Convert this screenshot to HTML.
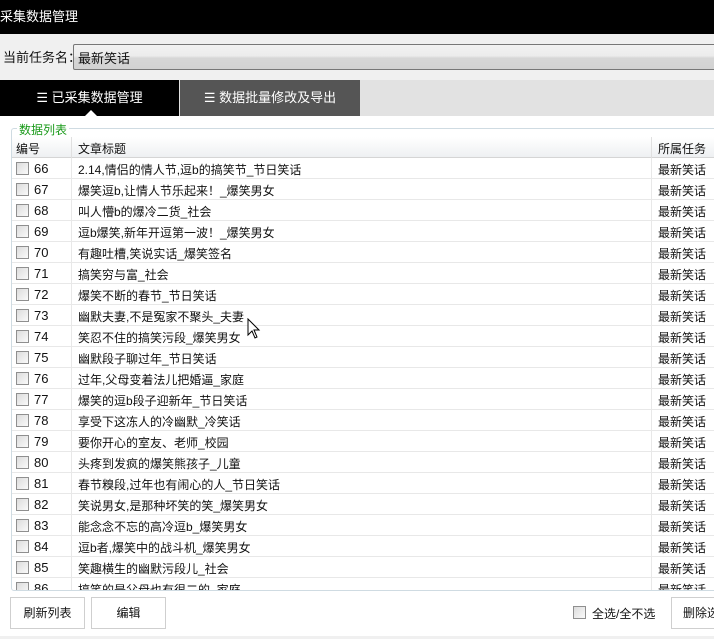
<!DOCTYPE html>
<html><head><meta charset="utf-8"><style>
*{margin:0;padding:0;box-sizing:border-box}
body{width:714px;height:639px;overflow:hidden;background:#fff;font-family:"Liberation Sans","Microsoft YaHei","Noto Sans CJK SC",sans-serif;font-size:12px;color:#111;position:relative;white-space:nowrap}
.a{position:absolute}
.cb{position:absolute;width:13px;height:13px;border:1px solid #8f8f8f;background:linear-gradient(135deg,#dcdcdc,#fafafa)}
.row{position:absolute;left:12px;width:702px;height:21px;border-bottom:1px solid #e8e8e8}
.row .n{position:absolute;left:22px;top:3px;font-size:13px}
.row .t{position:absolute;left:66px;top:3px}
.row .k{position:absolute;left:646px;top:3px}
.row .cb{left:4px;top:4px}
.btn{position:absolute;top:597px;height:32px;border:1px solid #cfcfcf;background:#fff;text-align:center;line-height:30px;overflow:hidden}
</style></head><body>
<div class="a" style="left:0;top:0;width:714px;height:34px;background:#000;color:#fff;font-size:13px;line-height:34px">采集数据管理</div>
<div class="a" style="left:0;top:34px;width:714px;height:46px;background:#f0f0f0"></div>
<div class="a" style="left:3px;top:47px;font-size:13px">当前任务名：</div>
<div class="a" style="left:73px;top:44px;width:650px;height:26px;border:1px solid #777;border-radius:2px;background:linear-gradient(#f2f2f2 0%,#ececec 45%,#d6d6d6 55%,#d2d2d2 100%);padding:3px 4px;font-size:13px">最新笑话</div>
<div class="a" style="left:0;top:80px;width:714px;height:36px;background:#e2e2e2"></div>
<div class="a" style="left:0;top:80px;width:179px;height:36px;background:#000;color:#fff;font-size:13px;text-align:center;line-height:36px">☰ 已采集数据管理</div>
<div class="a" style="left:85px;top:110px;width:0;height:0;border-left:6px solid transparent;border-right:6px solid transparent;border-bottom:6px solid #fff"></div>
<div class="a" style="left:180px;top:80px;width:180px;height:36px;background:#555;color:#fff;font-size:13px;text-align:center;line-height:36px">☰ 数据批量修改及导出</div>
<div class="a" style="left:11px;top:128px;width:720px;height:463px;border:1px solid #cfdbe2;border-radius:3px"></div>
<div class="a" style="left:17px;top:121px;background:#fff;color:#1a9a1a;font-size:12px;padding:0 2px">数据列表</div>
<div class="a" style="left:12px;top:137px;width:702px;height:21px;background:linear-gradient(#fff,#eef0f2);border-bottom:1px solid #d5d5d5">
<span class="a" style="left:4px;top:3px">编号</span>
<span class="a" style="left:59px;top:0;height:21px;border-left:1px solid #e0e0e0"></span>
<span class="a" style="left:66px;top:3px">文章标题</span>
<span class="a" style="left:639px;top:0;height:21px;border-left:1px solid #e0e0e0"></span>
<span class="a" style="left:646px;top:3px">所属任务</span>
</div>
<div class="a" style="left:11px;top:158px;width:703px;height:432px;overflow:hidden">
<div class="a" style="left:60px;top:0;height:432px;border-left:1px solid #e8e8e8;z-index:2"></div>
<div class="a" style="left:640px;top:0;height:432px;border-left:1px solid #e8e8e8;z-index:2"></div>
<div id="rows"></div>
</div>
<script>
var t=["2.14,情侣的情人节,逗b的搞笑节_节日笑话","爆笑逗b,让情人节乐起来！_爆笑男女","叫人懵b的爆冷二货_社会","逗b爆笑,新年开逗第一波！_爆笑男女","有趣吐槽,笑说实话_爆笑签名","搞笑穷与富_社会","爆笑不断的春节_节日笑话","幽默夫妻,不是冤家不聚头_夫妻","笑忍不住的搞笑污段_爆笑男女","幽默段子聊过年_节日笑话","过年,父母变着法儿把婚逼_家庭","爆笑的逗b段子迎新年_节日笑话","享受下这冻人的冷幽默_冷笑话","要你开心的室友、老师_校园","头疼到发疯的爆笑熊孩子_儿童","春节糗段,过年也有闹心的人_节日笑话","笑说男女,是那种坏笑的笑_爆笑男女","能念念不忘的高冷逗b_爆笑男女","逗b者,爆笑中的战斗机_爆笑男女","笑趣横生的幽默污段儿_社会","搞笑的是父母也有很二的_家庭"];
var h="";for(var i=0;i<t.length;i++){h+='<div class="row" style="left:1px;top:'+(i*21)+'px"><div class="cb"></div><span class="n">'+(66+i)+'</span><span class="t">'+t[i]+'</span><span class="k">最新笑话</span></div>';}
document.getElementById("rows").innerHTML=h;
</script>
<svg class="a" style="left:247px;top:318px" width="14" height="22" viewBox="0 0 14 22"><path d="M1 1 L1 17 L5 13 L8 20 L10 19 L7 12 L12 12 Z" fill="#fff" stroke="#000" stroke-width="1"/></svg>
<div class="btn" style="left:10px;width:75px">刷新列表</div>
<div class="btn" style="left:91px;width:75px">编辑</div>
<div class="cb" style="left:573px;top:606px"></div>
<div class="a" style="left:592px;top:605px">全选/全不选</div>
<div class="btn" style="left:671px;width:60px;text-align:left;padding-left:11px">删除选中</div>
<div class="a" style="left:0;top:636px;width:714px;height:3px;background:#f0f0f0"></div>
</body></html>
